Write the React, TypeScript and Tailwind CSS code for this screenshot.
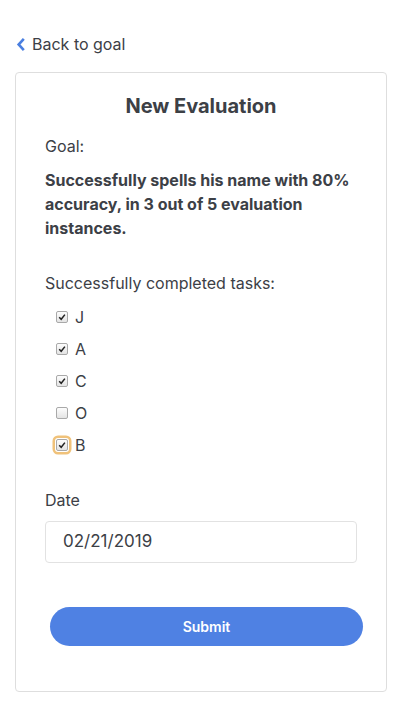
import { useState } from "react";

const tasks = [
  { id: "J", done: true },
  { id: "A", done: true },
  { id: "C", done: true },
  { id: "O", done: false },
  { id: "B", done: true },
];

const Box = ({ checked, focused }: { checked: boolean; focused?: boolean }) => (
  <span
    className={
      "flex h-[14px] w-[14px] items-center justify-center rounded-[3px] " +
      (focused ? "ring-[2.5px] ring-[#f0c27a]" : "")
    }
  >
    <span className="flex h-[12px] w-[12px] items-center justify-center rounded-[2px] border border-[#a9a9a9] bg-gradient-to-b from-[#fdfdfd] to-[#e4e4e4]">
      {checked && (
        <svg viewBox="0 0 10 10" className="h-[8px] w-[8px]">
          <path d="M1.5 5.2 L4 7.8 L8.6 2" fill="none" stroke="#222" strokeWidth="1.9" />
        </svg>
      )}
    </span>
  </span>
);

export default function App() {
  const [list, setList] = useState(tasks);

  const toggle = (id: string) =>
    setList(list.map((t) => (t.id === id ? { ...t, done: !t.done } : t)));

  return (
    <div className="min-h-[704px] bg-white pl-[15px] pr-[13px] pt-[32px] font-['Inter','Liberation_Sans',sans-serif] text-[#3c4046]">
      {/* Back link */}
      <a className="flex items-center gap-[6px] pl-[1px] text-[16px] text-[#3c4046]">
        <svg viewBox="0 0 10 16" className="h-[15px] w-[10px]">
          <path d="M8 2 L2.5 8 L8 14" fill="none" stroke="#4a7fe0" strokeWidth="2.8" />
        </svg>
        Back to goal
      </a>

      {/* Card */}
      <div className="mt-[16px] h-[620px] rounded-[4px] border border-[#dedede] px-[29px] pt-[19px]">
        <h1 className="text-center text-[20px] font-bold leading-[28px]">New Evaluation</h1>

        <p className="mt-[14px] text-[16px] leading-[24px]">Goal:</p>
        <p className="mt-[10px] text-[16px] font-bold leading-[24px]">
          Successfully spells his name with 80% accuracy, in 3 out of 5 evaluation instances.
        </p>

        <p className="mt-[31px] text-[16px] leading-[24px]">Successfully completed tasks:</p>
        <div className="mt-[6px] flex flex-col pl-[10px]">
          {list.map((t, i) => (
            <label
              key={t.id}
              onClick={() => toggle(t.id)}
              className="flex h-[32px] items-center gap-[6px] text-[16px]"
            >
              <Box checked={t.done} focused={i === list.length - 1} />
              <span>{t.id}</span>
            </label>
          ))}
        </div>

        <p className="mt-[27px] text-[16px] leading-[24px]">Date</p>
        <div className="mt-[9px] flex h-[42px] items-center rounded-[4px] border border-[#e2e2e2] px-[17px] text-[17px]">
          02/21/2019
        </div>

        <button className="mx-[5px] mt-[44px] h-[39px] w-[313px] rounded-full bg-[#4f81e3] text-[14px] font-semibold text-white">
          Submit
        </button>
      </div>
    </div>
  );
}
